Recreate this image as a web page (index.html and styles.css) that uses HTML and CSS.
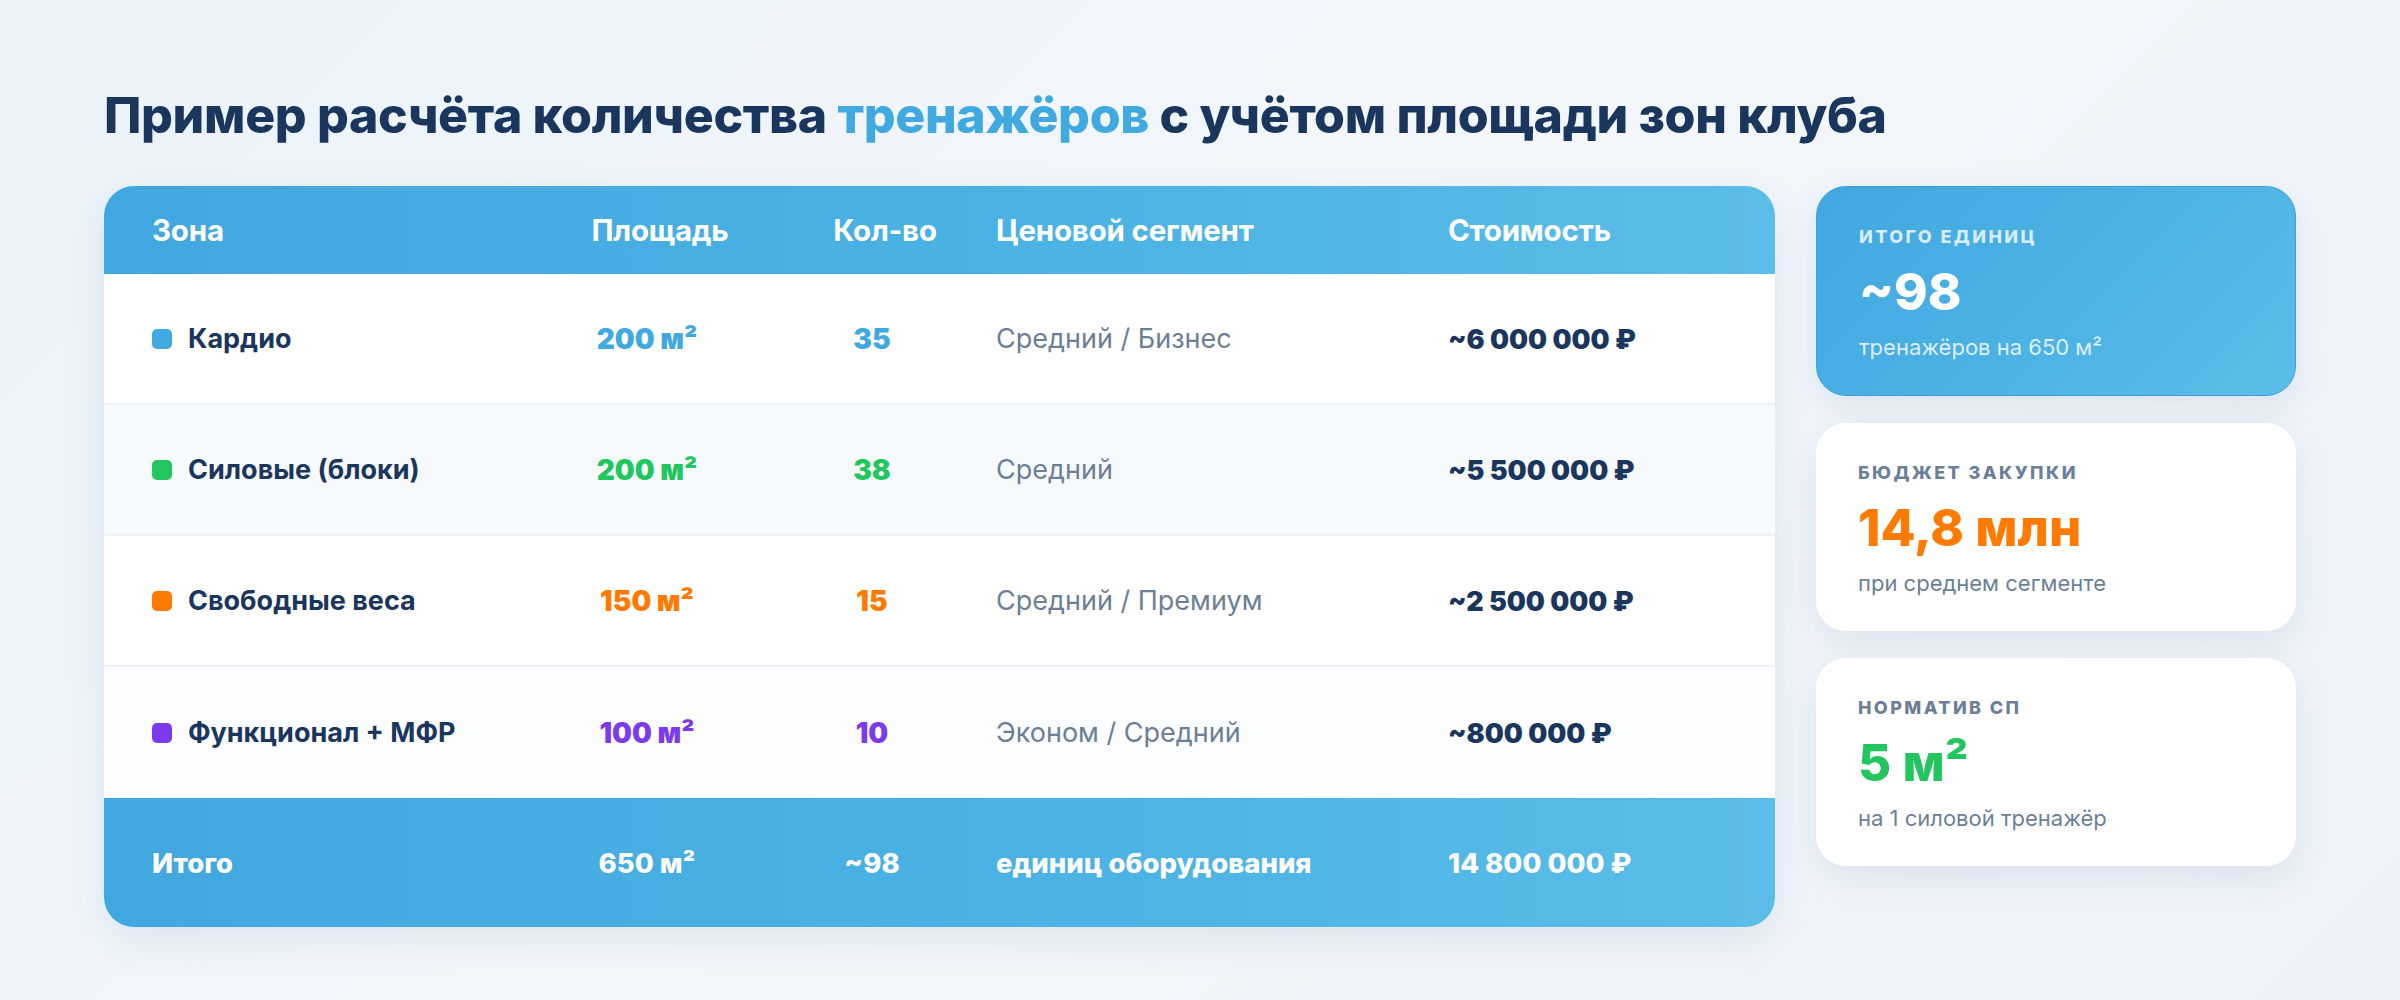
FILE: index.html
```html
<!DOCTYPE html>
<html lang="ru">
<head>
<meta charset="utf-8">
<title>Пример расчёта количества тренажёров</title>
<link rel="stylesheet" href="styles.css">
</head>
<body>
<main class="page">
  <h1 class="title">Пример расчёта количества <span class="accent">тренажёров</span> с учётом площади зон клуба</h1>
  <div class="layout">
    <section class="table-card">
      <div class="row head">
        <div class="cell">Зона</div>
        <div class="cell num head-num">Площадь</div>
        <div class="cell num head-num">Кол-во</div>
        <div class="cell">Ценовой сегмент</div>
        <div class="cell">Стоимость</div>
      </div>
      <div class="row body">
        <div class="cell zone"><span class="dot blue-bg"></span>Кардио</div>
        <div class="cell num val blue">200 м²</div>
        <div class="cell num val blue">35</div>
        <div class="cell seg">Средний / Бизнес</div>
        <div class="cell cost">~6 000 000 ₽</div>
      </div>
      <div class="row body alt">
        <div class="cell zone"><span class="dot green-bg"></span>Силовые (блоки)</div>
        <div class="cell num val green">200 м²</div>
        <div class="cell num val green">38</div>
        <div class="cell seg">Средний</div>
        <div class="cell cost">~5 500 000 ₽</div>
      </div>
      <div class="row body">
        <div class="cell zone"><span class="dot orange-bg"></span>Свободные веса</div>
        <div class="cell num val orange">150 м²</div>
        <div class="cell num val orange">15</div>
        <div class="cell seg">Средний / Премиум</div>
        <div class="cell cost">~2 500 000 ₽</div>
      </div>
      <div class="row body alt2">
        <div class="cell zone"><span class="dot purple-bg"></span>Функционал + МФР</div>
        <div class="cell num val purple">100 м²</div>
        <div class="cell num val purple">10</div>
        <div class="cell seg">Эконом / Средний</div>
        <div class="cell cost">~800 000 ₽</div>
      </div>
      <div class="row foot">
        <div class="cell">Итого</div>
        <div class="cell num">650 м²</div>
        <div class="cell num">~98</div>
        <div class="cell">единиц оборудования</div>
        <div class="cell">14 800 000 ₽</div>
      </div>
    </section>
    <aside class="stats">
      <div class="stat stat-primary">
        <div class="stat-label">Итого единиц</div>
        <div class="stat-value">~98</div>
        <div class="stat-sub">тренажёров на 650 м²</div>
      </div>
      <div class="stat">
        <div class="stat-label">Бюджет закупки</div>
        <div class="stat-value stat-orange">14,8 млн</div>
        <div class="stat-sub">при среднем сегменте</div>
      </div>
      <div class="stat">
        <div class="stat-label">Норматив СП</div>
        <div class="stat-value stat-green">5 м²</div>
        <div class="stat-sub">на 1 силовой тренажёр</div>
      </div>
    </aside>
  </div>
</main>
</body>
</html>
```
FILE: styles.css
```css
* { box-sizing: border-box; }

html, body {
  margin: 0;
  padding: 0;
}

body {
  font-family: Inter, "Noto Sans", "DejaVu Sans", sans-serif;
  background: linear-gradient(135deg, #eaf2fa 0%, #f3f7fc 45%, #eef3f9 100%);
  color: #1b365d;
  width: 2400px;
  height: 1000px;
  overflow: hidden;
}

.page {
  padding: 85px 104px 0 104px;
}

.title {
  margin: 0 0 41px 0;
  font-size: 50px;
  line-height: 60px;
  font-weight: 800;
  letter-spacing: -0.35px;
  color: #1b365d;
}

.accent { color: #3fa9e0; }

.layout {
  display: grid;
  grid-template-columns: 1fr 480px;
  gap: 41px;
  align-items: start;
}

.table-card {
  border-radius: 30px;
  overflow: hidden;
  background: #ffffff;
  box-shadow: 0 14px 40px rgba(40, 80, 130, 0.10);
}

.row {
  display: grid;
  grid-template-columns: 394px 202px 248px 452px 279px;
  padding: 0 48px;
  align-items: center;
}

.cell {
  white-space: nowrap;
}

.num { text-align: center; }

.head {
  height: 88px;
  background: linear-gradient(90deg, #41a7df 0%, #4cb3e4 60%, #5bbde8 100%);
  color: #ffffff;
  font-weight: 700;
  font-size: 29.5px;
  letter-spacing: -0.2px;
}

.head-num { padding-left: 26px; }

.body {
  height: 131px;
  background: #ffffff;
  border-bottom: 2px solid #edf2f7;
  font-size: 27px;
}

.body.alt { background: #f7fafd; }
.body.alt2 { background: #fcfdfe; border-bottom: none; }

.zone {
  display: flex;
  align-items: center;
  gap: 16px;
  font-weight: 700;
  color: #1b365d;
}

.dot {
  width: 20px;
  height: 20px;
  border-radius: 5px;
  flex: 0 0 20px;
}

.val { font-weight: 900; font-size: 28px; }
.seg { color: #6b7f99; font-weight: 400; }
.cost { font-weight: 900; font-size: 26.8px; color: #1b365d; }

.blue { color: #3fa9e0; }
.green { color: #22c55e; }
.orange { color: #ff7a00; }
.purple { color: #7c3aed; }

.blue-bg { background: #3fa9e0; }
.green-bg { background: #22c55e; }
.orange-bg { background: #ff7a00; }
.purple-bg { background: #7c3aed; }

.foot {
  height: 129px;
  background: linear-gradient(90deg, #41a7df 0%, #4cb3e4 60%, #5bbde8 100%);
  color: #ffffff;
  font-weight: 800;
  font-size: 27.5px;
}

.stats {
  display: flex;
  flex-direction: column;
  gap: 27px;
}

.stat {
  background: #ffffff;
  border-radius: 30px;
  padding: 36px 42px 33px 42px;
  box-shadow: 0 12px 36px rgba(40, 80, 130, 0.10);
}

.stat-primary {
  background: linear-gradient(135deg, #41a7df 0%, #4db3e5 55%, #5bbde8 100%);
  border: 1px solid #3e9fd6;
  padding-top: 36px;
  padding-bottom: 33px;
}

.stat-label {
  font-size: 18px;
  line-height: 28px;
  font-weight: 800;
  letter-spacing: 2.4px;
  text-transform: uppercase;
  color: #6b7f99;
}

.stat-primary .stat-label { color: rgba(255, 255, 255, 0.78); }

.stat-value {
  margin-top: 11px;
  font-size: 51px;
  line-height: 60px;
  font-weight: 800;
  color: #1b365d;
}

.stat-primary .stat-value { color: #ffffff; }
.stat-value.stat-orange { color: #ff7a00; }
.stat-value.stat-green { color: #22c55e; }

.stat-sub {
  margin-top: 10px;
  font-size: 22px;
  line-height: 30px;
  color: #6b7f99;
}

.stat-primary .stat-sub { color: rgba(255, 255, 255, 0.82); }
```
